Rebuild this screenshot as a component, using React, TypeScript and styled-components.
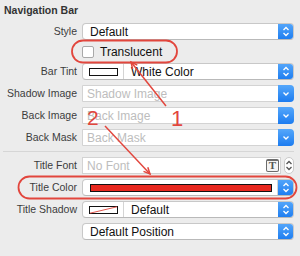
import React from 'react';
import styled, { createGlobalStyle } from 'styled-components';

const GlobalStyle = createGlobalStyle`
  html, body {
    margin: 0;
    padding: 0;
    background: #ececec;
  }
  body {
    font-family: "Liberation Sans", Arial, sans-serif;
    -webkit-font-smoothing: antialiased;
  }
`;

const Panel = styled.div`
  position: relative;
  width: 300px;
  height: 256px;
  box-sizing: border-box;
  padding: 3px 6px 0 0;
  background: #ececec;
  overflow: hidden;
`;

const Header = styled.div`
  font-weight: bold;
  font-size: 10.5px;
  line-height: 14px;
  color: #333;
  padding-left: 4px;
  height: 20px;
`;

const Form = styled.div`
  display: grid;
  grid-template-columns: 77px 212px;
  column-gap: 5px;
  row-gap: 5px;
  align-items: center;
`;

const Label = styled.div`
  font-size: 10.5px;
  color: #3c3c3c;
  text-align: right;
  line-height: 17px;
  white-space: nowrap;
`;

const Popup = styled.div`
  display: flex;
  align-items: stretch;
  height: 17px;
  box-sizing: border-box;
  background: #fff;
  border: 1px solid #c8c8c8;
  border-bottom-color: #b9b9b9;
  border-radius: 4px;
  overflow: hidden;
`;

const Value = styled.div<{ $muted?: boolean }>`
  flex: 1;
  display: flex;
  align-items: center;
  padding-left: ${p => (p.$muted ? '4px' : '7px')};
  font-size: 12px;
  color: ${p => (p.$muted ? '#bdbdbd' : '#111')};
  white-space: nowrap;
  overflow: hidden;
`;

const Stepper = styled.div`
  width: 16px;
  flex: none;
  display: flex;
  align-items: center;
  justify-content: center;
  background: linear-gradient(#55a7fb, #1c7cf0);
  margin: -1px -1px -1px 0;
  border-radius: 0 4px 4px 0;
`;

const Field = styled.div`
  display: flex;
  align-items: stretch;
  height: 17px;
  box-sizing: border-box;
  background: #fff;
  border: 1px solid #d3d3d3;
  border-radius: 0 4px 4px 0;
`;

const SwatchCell = styled.div<{ $wide?: boolean }>`
  flex: ${p => (p.$wide ? '1' : 'none')};
  width: ${p => (p.$wide ? 'auto' : '40px')};
  display: flex;
  align-items: center;
  justify-content: ${p => (p.$wide ? 'flex-start' : 'center')};
  padding-left: ${p => (p.$wide ? '7px' : '0')};
  padding-right: ${p => (p.$wide ? '5px' : '0')};
  border-right: 1px solid #d4d4d4;
`;

const Swatch = styled.div<{ $color: string; $wide?: boolean }>`
  width: ${p => (p.$wide ? '100%' : '27px')};
  height: 6px;
  background: ${p => p.$color};
  border: 1px solid #111;
`;

const CheckRow = styled.label`
  display: flex;
  align-items: center;
  gap: 6px;
  height: 13px;
  font-size: 12px;
  color: #111;
`;

const Checkbox = styled.span`
  width: 10px;
  height: 10px;
  border: 1px solid #a9a9a9;
  border-radius: 2px;
  background: #fff;
`;

const Separator = styled.div`
  grid-column: 1 / -1;
  height: 1px;
  background: #d6d6d6;
  margin: 0 0 0 3px;
`;

const FontRow = styled.div`
  display: flex;
  align-items: center;
  gap: 3px;
`;

const FontField = styled(Field)`
  flex: 1;
  border-radius: 0;
  align-items: center;
  padding-right: 1px;
`;

const FontButton = styled.span`
  width: 13px;
  height: 13px;
  box-sizing: border-box;
  border: 1.5px solid #6c6c6c;
  border-top-width: 2.5px;
  border-radius: 2px;
  background: #f4f4f4;
  font-family: "Liberation Serif", serif;
  font-weight: bold;
  font-size: 11px;
  line-height: 9px;
  text-align: center;
  color: #555;
`;

const MiniStepper = styled.div`
  width: 10px;
  height: 17px;
  box-sizing: border-box;
  border: 1px solid #c9c9c9;
  border-radius: 5px;
  background: #fff;
  display: flex;
  align-items: center;
  justify-content: center;
`;

const Overlay = styled.svg`
  position: absolute;
  left: 0;
  top: 0;
  pointer-events: none;
`;

const UpDown = ({ color = '#fff' }: { color?: string }) => (
  <svg width="8" height="11" viewBox="0 0 8 11">
    <polyline points="1.5,4 4,1.5 6.5,4" fill="none" stroke={color} strokeWidth="1.3" />
    <polyline points="1.5,7 4,9.5 6.5,7" fill="none" stroke={color} strokeWidth="1.3" />
  </svg>
);

const Down = () => (
  <svg width="8" height="6" viewBox="0 0 8 6">
    <polyline points="1.5,1.5 4,4 6.5,1.5" fill="none" stroke="#fff" strokeWidth="1.3" />
  </svg>
);

const ShadowSwatch = () => (
  <svg width="29" height="8" viewBox="0 0 29 8">
    <rect x="0.5" y="0.5" width="28" height="7" fill="#fff" stroke="#111" />
    <line x1="1" y1="7.2" x2="28" y2="0.8" stroke="#e0443b" strokeWidth="0.9" />
  </svg>
);

const SelectBox = ({ children }: { children: React.ReactNode }) => (
  <Popup>
    {children}
    <Stepper>
      <UpDown />
    </Stepper>
  </Popup>
);

const ComboBox = ({ placeholder }: { placeholder: string }) => (
  <Field>
    <Value $muted>{placeholder}</Value>
    <Stepper>
      <Down />
    </Stepper>
  </Field>
);

const red = '#e2463d';

const App = () => (
  <>
    <GlobalStyle />
    <Panel>
      <Header>Navigation Bar</Header>
      <Form>
        <Label>Style</Label>
        <SelectBox>
          <Value>Default</Value>
        </SelectBox>

        <div />
        <CheckRow>
          <Checkbox />
          Translucent
        </CheckRow>

        <Label>Bar Tint</Label>
        <SelectBox>
          <SwatchCell>
            <Swatch $color="#fff" />
          </SwatchCell>
          <Value>White Color</Value>
        </SelectBox>

        <Label>Shadow Image</Label>
        <ComboBox placeholder="Shadow Image" />

        <Label>Back Image</Label>
        <ComboBox placeholder="Back Image" />

        <Label>Back Mask</Label>
        <ComboBox placeholder="Back Mask" />

        <Separator />

        <Label>Title Font</Label>
        <FontRow>
          <FontField>
            <Value $muted>No Font</Value>
            <FontButton>T</FontButton>
          </FontField>
          <MiniStepper>
            <UpDown color="#555" />
          </MiniStepper>
        </FontRow>

        <Label>Title Color</Label>
        <SelectBox>
          <SwatchCell $wide>
            <Swatch $color="#e8281e" $wide />
          </SwatchCell>
        </SelectBox>

        <Label>Title Shadow</Label>
        <SelectBox>
          <SwatchCell>
            <ShadowSwatch />
          </SwatchCell>
          <Value>Default</Value>
        </SelectBox>

        <div />
        <SelectBox>
          <Value>Default Position</Value>
        </SelectBox>
      </Form>

      <Overlay width="300" height="256" viewBox="0 0 300 256">
        <rect x="72" y="40.5" width="105" height="22" rx="11" fill="none" stroke={red} strokeWidth="1.8" />
        <rect x="18.5" y="176.5" width="278" height="22" rx="11" fill="none" stroke={red} strokeWidth="1.8" />
        <line x1="166" y1="106" x2="131" y2="62" stroke={red} strokeWidth="1.5" />
        <polyline points="132.6,68.8 131,62 137.3,65.1" fill="none" stroke={red} strokeWidth="1.5" />
        <line x1="105" y1="126" x2="150" y2="174" stroke={red} strokeWidth="1.5" />
        <polyline points="147.8,167.3 150,174 143.5,171.4" fill="none" stroke={red} strokeWidth="1.5" />
        <text x="171" y="126" fill={red} fontSize="22" fontFamily="Liberation Sans, sans-serif" fontWeight="300">1</text>
        <text x="87" y="125" fill={red} fontSize="21" fontFamily="Liberation Sans, sans-serif" fontWeight="300">2</text>
      </Overlay>
    </Panel>
  </>
);

export default App;
